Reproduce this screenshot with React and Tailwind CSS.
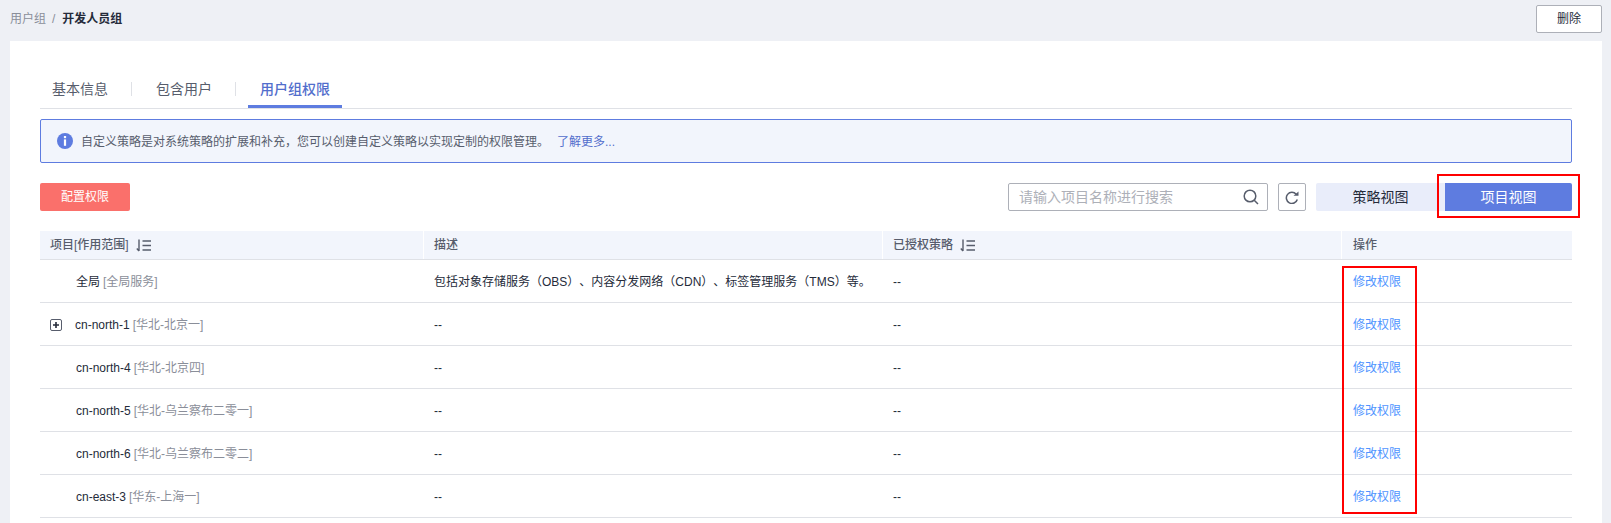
import React from "react"

const rows = [
  { name: "全局", region: "[全局服务]", desc: "包括对象存储服务（OBS）、内容分发网络（CDN）、标签管理服务（TMS）等。" },
  { name: "cn-north-1", region: "[华北-北京一]", expand: true },
  { name: "cn-north-4", region: "[华北-北京四]" },
  { name: "cn-north-5", region: "[华北-乌兰察布二零一]" },
  { name: "cn-north-6", region: "[华北-乌兰察布二零二]" },
  { name: "cn-east-3", region: "[华东-上海一]" },
]

const SortIcon = () => (
  <svg width="15" height="13" viewBox="0 0 15 13" fill="none" stroke="#575d6c" strokeWidth="1.4" className="ml-[7px]">
    <path d="M3 0.5v11.5M0.8 9.5L3 12" />
    <path d="M6.5 2h8.5M6.5 6.5h8.5M6.5 11h8.5" />
  </svg>
)

const PlusBox = () => (
  <svg width="12" height="12" viewBox="0 0 12 12" fill="none" className="shrink-0">
    <rect x="0.5" y="0.5" width="11" height="11" rx="1.5" stroke="#575d6c" />
    <path d="M3 6h6M6 3v6" stroke="#252b3a" strokeWidth="1.6" />
  </svg>
)

const InfoIcon = () => (
  <svg width="16" height="16" viewBox="0 0 16 16" className="shrink-0">
    <circle cx="8" cy="8" r="8" fill="#5e7ce0" />
    <rect x="6.9" y="3" width="2.2" height="2.2" fill="#fff" />
    <rect x="6.9" y="6.4" width="2.2" height="6.4" fill="#fff" />
  </svg>
)

const SearchIcon = () => (
  <svg width="16" height="16" viewBox="0 0 16 16" fill="none" stroke="#575d6c" strokeWidth="1.5">
    <circle cx="7" cy="7" r="5.8" />
    <path d="M11.2 11.2L15 15" />
  </svg>
)

const RefreshIcon = () => (
  <svg width="14" height="13" viewBox="0 0 14 13" fill="none">
    <path d="M11.2 3.2A5.6 5.6 0 1 0 12.3 8.5" stroke="#575d6c" strokeWidth="1.5" />
    <path d="M8.5 4.8L13.5 0.6V4.8Z" fill="#575d6c" />
  </svg>
)

export default function App() {
  return (
    <div className="flex flex-col h-[523px] overflow-hidden bg-[#eef0f5] text-[12px] text-[#252b3a] [text-spacing-trim:space-all] font-['Liberation_Sans','Noto_Sans_CJK_SC',sans-serif]">
      {/* breadcrumb */}
      <div className="flex h-[41px] shrink-0 items-start justify-between pl-[10px] pr-[9px]">
        <div className="mt-[10px] flex gap-[6px] leading-[18px]">
          <span className="text-[#8a8e99]">用户组</span>
          <span className="mr-[1px] text-[#8a8e99]">/</span>
          <span className="font-bold">开发人员组</span>
        </div>
        <button className="mt-[5px] h-[28px] w-[66px] rounded-[2px] border border-[#adb0b8] bg-white">删除</button>
      </div>

      <div className="relative ml-[10px] mr-[9px] flex-1 bg-white px-[30px] pt-[34px]">
        {/* tabs */}
        <div className="flex h-[34px] items-start border-b border-[#dfe1e6] text-[14px] text-[#575d6c]">
          <div className="flex h-[28px] w-[91px] items-center pl-[12px] leading-[28px]">基本信息</div>
          <div className="mt-[7px] h-[14px] w-px bg-[#dfe1e6]" />
          <div className="flex h-[28px] w-[103px] items-center pl-[24px]">包含用户</div>
          <div className="mt-[7px] h-[14px] w-px bg-[#dfe1e6]" />
          <div className="ml-[12px] flex h-[33px] w-[94px] justify-center border-b-[3px] border-[#5e7ce0] pt-[5px] font-medium leading-[18px] text-[#526ecc]">用户组权限</div>
        </div>

        {/* alert */}
        <div className="mt-[10px] flex h-[44px] items-center rounded-[2px] border border-[#5e7ce0] bg-[#f2f5fc] pl-[16px] text-[#575d6c]">
          <InfoIcon />
          <span className="ml-[8px] pt-[2px]">自定义策略是对系统策略的扩展和补充，您可以创建自定义策略以实现定制的权限管理。</span>
          <span className="ml-[8px] pt-[2px] text-[#526ecc]">了解更多...</span>
        </div>

        {/* toolbar */}
        <div className="mt-[20px] flex h-[28px] items-center">
          <button className="h-[28px] w-[90px] rounded-[2px] bg-[#fa706b] text-white">配置权限</button>
          <div className="ml-auto flex h-[28px] w-[260px] items-center justify-between rounded-[2px] border border-[#adb0b8] pl-[10px] pr-[8px] text-[14px] text-[#adb0b8]">
            <span>请输入项目名称进行搜索</span>
            <SearchIcon />
          </div>
          <div className="ml-[10px] flex h-[28px] w-[28px] items-center justify-center rounded-[2px] border border-[#adb0b8]">
            <RefreshIcon />
          </div>
          <button className="ml-[10px] h-[28px] w-[129px] rounded-l-[2px] bg-[#e9edfa] text-[14px] text-[#252b3a]">策略视图</button>
          <button className="h-[28px] w-[127px] rounded-r-[2px] bg-[#5e7ce0] text-[14px] text-white">项目视图</button>
        </div>

        {/* table */}
        <div className="mt-[20px]">
          <div className="grid h-[29px] grid-cols-[384px_459px_459px_230px] border-b border-[#dfe1e6] bg-[#f2f5fc] font-medium text-[#575d6c]">
            <div className="flex items-center border-r border-white pl-[10px]">项目[作用范围]<SortIcon /></div>
            <div className="flex items-center border-r border-white pl-[10px]">描述</div>
            <div className="flex items-center border-r border-white pl-[10px]">已授权策略<SortIcon /></div>
            <div className="flex items-center pl-[11px]">操作</div>
          </div>
          {rows.map((r) => (
            <div key={r.name} className="grid h-[43px] grid-cols-[384px_459px_459px_230px] items-center border-b border-[#dfe1e6] pt-[2px]">
              <div className="flex items-center pl-[10px]">
                {r.expand ? <PlusBox /> : <span className="w-[13px]" />}
                <span className="ml-[13px]">{r.name}</span>
                <span className="ml-[3px] text-[#8a8e99]">{r.region}</span>
              </div>
              <div className="pl-[10px]">{r.desc || "--"}</div>
              <div className="pl-[10px]">--</div>
              <div className="pl-[11px] text-[#4f94ff]">修改权限</div>
            </div>
          ))}
        </div>

        {/* red annotation boxes */}
        <div className="absolute left-[1427px] top-[133px] h-[44px] w-[143px] border-2 border-[#ff0000]" />
        <div className="absolute left-[1332px] top-[225px] h-[248px] w-[75px] border-2 border-[#ff0000]" />
      </div>
    </div>
  )
}
